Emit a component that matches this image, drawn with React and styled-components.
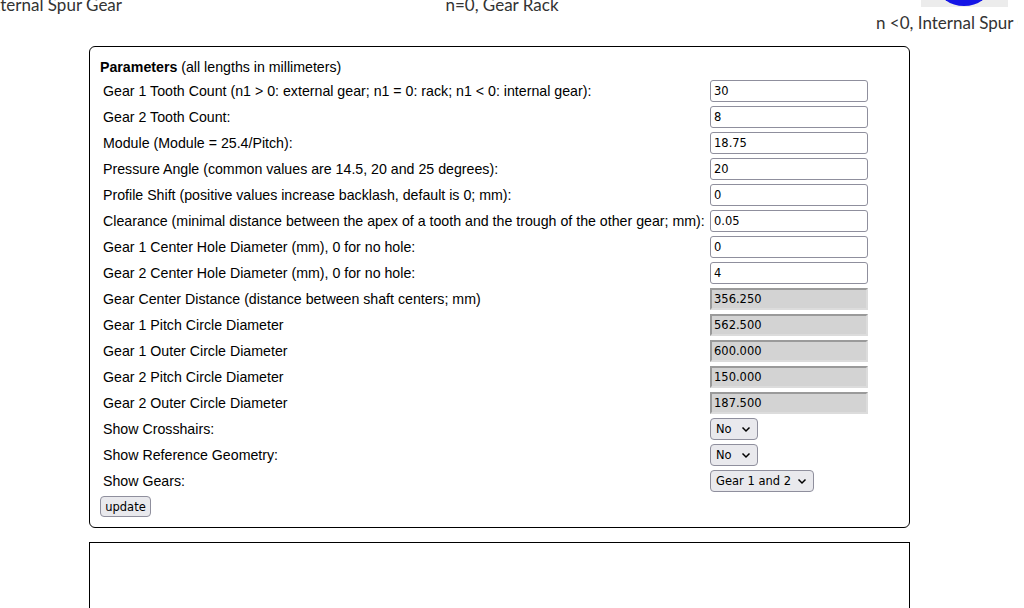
import React from "react"
import styled, { createGlobalStyle } from "styled-components"

const Global = createGlobalStyle`
  html, body {
    margin: 0;
    padding: 0;
    overflow: hidden;
    background: #fff;
  }
  body {
    font-family: "Liberation Sans", Arial, sans-serif;
  }
`

const Header = styled.div`
  display: flex;
  align-items: flex-start;
  height: 46px;
  overflow: hidden;
  width: 1018px;
`

const Figure = styled.div`
  display: flex;
  flex-direction: column;
  align-items: ${(p) => p.align || "center"};
  flex: 0 0 auto;
  box-sizing: border-box;
  width: ${(p) => p.width || "auto"};
  margin-top: ${(p) => p.offset || 0}px;
  padding-left: ${(p) => p.padLeft || 0}px;
`

const Caption = styled.div`
  font-family: Lato, "Open Sans", sans-serif;
  font-size: 17px;
  line-height: 20px;
  color: #333;
  white-space: nowrap;
`

const Thumb = styled.svg`
  display: block;
  margin-bottom: 6px;
`

const Panel = styled.div`
  box-sizing: border-box;
  margin: 0 0 0 89px;
  width: 821px;
  border: 1px solid #000;
  border-radius: ${(p) => (p.square ? 0 : 6)}px;
  padding: ${(p) => (p.square ? 0 : "8px 10px 10px 10px")};
  height: ${(p) => p.height || "auto"};
`

const Spacer = styled.div`
  height: 14px;
`

const Title = styled.div`
  padding: 4px 0 2px 0;
  line-height: 16px;
  font-size: 14.2px;
  color: #000;
`

const Form = styled.div`
  display: grid;
  grid-template-columns: 605px 160px;
  gap: 2px;
  padding: 2px;
  font-size: 14.2px;
  color: #000;
`

const Label = styled.div`
  padding: 1px;
  height: 22px;
  display: flex;
  align-items: center;
  white-space: nowrap;
`

const Cell = styled.div`
  padding: 1px;
  height: 22px;
  display: flex;
  align-items: center;
`

const Field = styled.input`
  box-sizing: border-box;
  width: 158px;
  height: 22px;
  margin: 0;
  padding: 0 3px;
  font-family: "DejaVu Sans", Verdana, sans-serif;
  font-size: 11.5px;
  color: #000;
  background: ${(p) => (p.readOnly ? "#d3d3d3" : "#fff")};
  border: ${(p) => (p.readOnly ? "2px solid" : "1px solid #8f8f9d")};
  border-color: ${(p) => (p.readOnly ? "#9a9a9a #dcdcdc #dcdcdc #9a9a9a" : "#8f8f9d")};
  border-radius: ${(p) => (p.readOnly ? 0 : 3)}px;
  padding-left: ${(p) => (p.readOnly ? 2 : 3)}px;
  outline: none;
`

const SelectBox = styled.label`
  box-sizing: border-box;
  display: inline-flex;
  align-items: center;
  gap: 6px;
  height: 22px;
  padding: 0 6px 0 5px;
  background: #e9e9ed;
  border: 1px solid #8f8f9d;
  border-radius: 4px;
`

const Select = styled.select`
  appearance: none;
  border: none;
  background: transparent;
  margin: 0;
  padding: 0;
  font-family: "DejaVu Sans", Verdana, sans-serif;
  font-size: 11.5px;
  color: #000;
  outline: none;
`

const Button = styled.button`
  display: block;
  box-sizing: border-box;
  margin: 1px 0 0 0;
  height: 21px;
  width: 51px;
  padding: 0 4px;
  font-family: "DejaVu Sans", Verdana, sans-serif;
  font-size: 11.5px;
  color: #000;
  background: #e9e9ed;
  border: 1px solid #8f8f9d;
  border-radius: 4px;
`

const Chevron = () => (
  <svg width="10" height="7" viewBox="0 0 10 7">
    <path d="M1.5 1.5 L5 5 L8.5 1.5" fill="none" stroke="#000" strokeWidth="1.5" />
  </svg>
)

const inputs = [
  ["Gear 1 Tooth Count (n1 > 0: external gear; n1 = 0: rack; n1 < 0: internal gear):", "30"],
  ["Gear 2 Tooth Count:", "8"],
  ["Module (Module = 25.4/Pitch):", "18.75"],
  ["Pressure Angle (common values are 14.5, 20 and 25 degrees):", "20"],
  ["Profile Shift (positive values increase backlash, default is 0; mm):", "0"],
  ["Clearance (minimal distance between the apex of a tooth and the trough of the other gear; mm):", "0.05"],
  ["Gear 1 Center Hole Diameter (mm), 0 for no hole:", "0"],
  ["Gear 2 Center Hole Diameter (mm), 0 for no hole:", "4"],
]

const outputs = [
  ["Gear Center Distance (distance between shaft centers; mm)", "356.250"],
  ["Gear 1 Pitch Circle Diameter", "562.500"],
  ["Gear 1 Outer Circle Diameter", "600.000"],
  ["Gear 2 Pitch Circle Diameter", "150.000"],
  ["Gear 2 Outer Circle Diameter", "187.500"],
]

const selects = [
  ["Show Crosshairs:", ["No", "Yes"]],
  ["Show Reference Geometry:", ["No", "Yes"]],
  ["Show Gears:", ["Gear 1 and 2", "Gear 1", "Gear 2"]],
]

export default function App() {
  return (
    <>
      <Global />
      <Header>
        <Figure width="122px" align="flex-end" offset={-5}>
          <Caption>n &gt;0, External Spur Gear</Caption>
        </Figure>
        <Figure width="754px" padLeft={6} offset={-5}>
          <Caption>n=0, Gear Rack</Caption>
        </Figure>
        <Figure>
          <Thumb width="87" height="7" viewBox="0 0 87 7">
            <rect x="0" y="0" width="87" height="7" fill="#ececec" />
            <ellipse cx="43" cy="-14" rx="26" ry="20" fill="#1414e6" />
          </Thumb>
          <Caption>n &lt;0, Internal Spur Gear</Caption>
        </Figure>
      </Header>

      <Panel>
        <Title>
          <b>Parameters</b> (all lengths in millimeters)
        </Title>
        <Form>
          {inputs.map(([label, value]) => (
            <React.Fragment key={label}>
              <Label>{label}</Label>
              <Cell>
                <Field defaultValue={value} />
              </Cell>
            </React.Fragment>
          ))}
          {outputs.map(([label, value]) => (
            <React.Fragment key={label}>
              <Label>{label}</Label>
              <Cell>
                <Field readOnly value={value} />
              </Cell>
            </React.Fragment>
          ))}
          {selects.map(([label, options]) => (
            <React.Fragment key={label}>
              <Label>{label}</Label>
              <Cell>
                <SelectBox>
                  <Select defaultValue={options[0]}>
                    {options.map((o) => (
                      <option key={o}>{o}</option>
                    ))}
                  </Select>
                  <Chevron />
                </SelectBox>
              </Cell>
            </React.Fragment>
          ))}
        </Form>
        <Button>update</Button>
      </Panel>

      <Spacer />
      <Panel square height="120px" />
    </>
  )
}
